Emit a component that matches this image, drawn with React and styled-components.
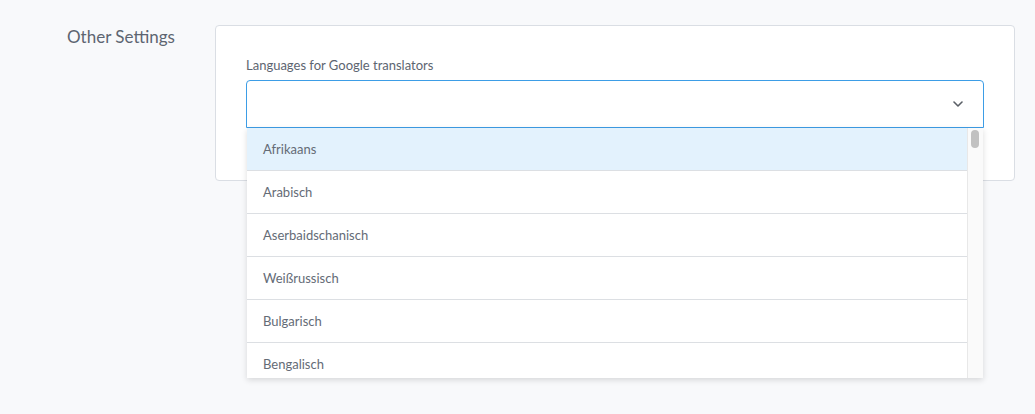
import React from "react";
import styled, { createGlobalStyle } from "styled-components";

const languages = [
  "Afrikaans",
  "Arabisch",
  "Aserbaidschanisch",
  "Weißrussisch",
  "Bulgarisch",
  "Bengalisch",
];

function App() {
  return (
    <>
      <GlobalStyle />
      <Page>
        <SectionTitle>Other Settings</SectionTitle>
        <Card>
          <FieldLabel>Languages for Google translators</FieldLabel>
          <SelectWrap>
            <SelectBox>
              <Chevron viewBox="0 0 10 6">
                <path d="M1 1l4 4 4-4" />
              </Chevron>
            </SelectBox>
            <Menu>
              <OptionList>
                {languages.map((lang, i) => (
                  <Option key={lang} active={i === 0}>
                    {lang}
                  </Option>
                ))}
              </OptionList>
              <ScrollTrack>
                <ScrollThumb />
              </ScrollTrack>
            </Menu>
          </SelectWrap>
        </Card>
      </Page>
    </>
  );
}

const GlobalStyle = createGlobalStyle`
  html, body {
    margin: 0;
    padding: 0;
    background: #f8f9fb;
  }
  body {
    font-family: "Lato", "Noto Sans", sans-serif;
  }
`;

const Page = styled.div`
  display: flex;
  align-items: flex-start;
  height: 414px;
  padding-top: 25px;
  box-sizing: border-box;
`;

const SectionTitle = styled.h2`
  width: 148px;
  margin: 0;
  padding: 0 0 0 67px;
  font-size: 17px;
  font-weight: 400;
  line-height: 24px;
  color: #5d6571;
`;

const Card = styled.div`
  width: 800px;
  height: 156px;
  box-sizing: border-box;
  padding: 30px 30px 0 30px;
  background: #fff;
  border: 1px solid #dadee4;
  border-radius: 4px;
`;

const FieldLabel = styled.div`
  font-size: 13px;
  line-height: 18px;
  color: #5d6571;
  margin-bottom: 6px;
`;

const SelectWrap = styled.div`
  position: relative;
`;

const SelectBox = styled.div`
  height: 48px;
  box-sizing: border-box;
  border: 1px solid #3d9de6;
  border-radius: 4px 4px 0 0;
  background: #fff;
  display: flex;
  align-items: center;
  justify-content: flex-end;
  padding-right: 20px;
`;

const Chevron = styled.svg`
  width: 10px;
  height: 6px;
  fill: none;
  stroke: #5a5f66;
  stroke-width: 1.6;
  stroke-linecap: round;
  stroke-linejoin: round;
`;

const Menu = styled.div`
  position: absolute;
  top: 100%;
  left: 1px;
  right: 1px;
  height: 250px;
  display: flex;
  background: #fff;
  overflow: hidden;
  box-shadow: 0 2px 6px rgba(0, 0, 0, 0.14);
  z-index: 2;
`;

const OptionList = styled.ul`
  flex: 1;
  margin: 0;
  padding: 0;
  list-style: none;
  overflow: hidden;
`;

const Option = styled.li`
  height: 43px;
  box-sizing: border-box;
  display: flex;
  align-items: center;
  padding-left: 16px;
  font-size: 13px;
  color: #646b76;
  border-bottom: 1px solid #dcdfe3;
  background: ${(p) => (p.active ? "#e3f2fd" : "#fff")};
`;

const ScrollTrack = styled.div`
  width: 16px;
  flex-shrink: 0;
  box-sizing: border-box;
  padding: 2px 4px 0 3px;
  background: #fafafa;
  border-left: 1px solid #e8e8e8;
`;

const ScrollThumb = styled.div`
  height: 18px;
  border-radius: 5px;
  background: #c1c1c1;
`;

export default App;
